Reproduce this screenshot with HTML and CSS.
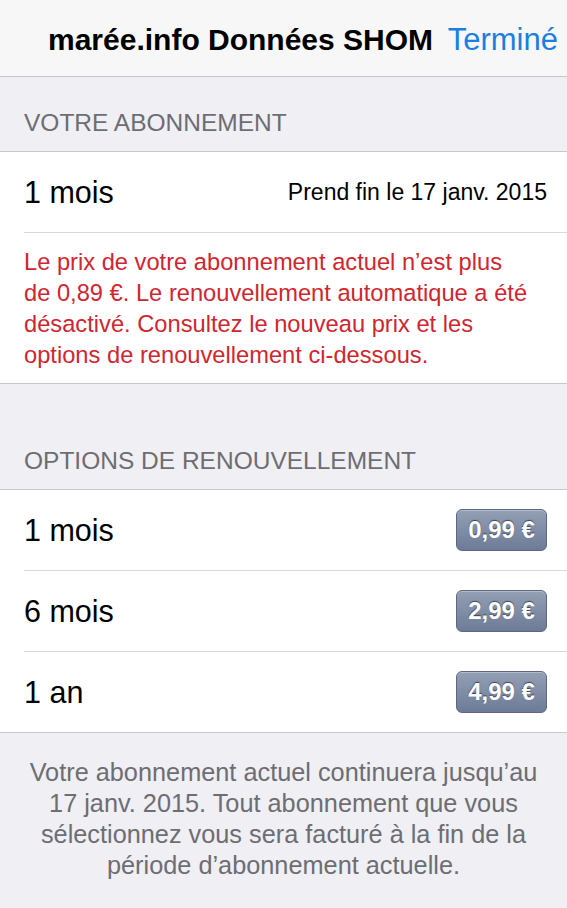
FILE: index.html
```html
<!DOCTYPE html>
<html lang="fr">
<head>
  <meta charset="UTF-8" />
  <meta name="viewport" content="width=device-width, initial-scale=1.0"/>
  <title>Abonnement</title>
  <link rel="stylesheet" href="styles.css">
</head>
<body>

  <div class="nav">
    <span class="nav-title">marée.info Données SHOM</span>
    <span class="nav-done">Terminé</span>
  </div>

  <div class="section-header first">VOTRE ABONNEMENT</div>
  <div class="group">
    <div class="row">
      <span class="row-label">1 mois</span>
      <span class="row-detail">Prend fin le 17 janv. 2015</span>
    </div>
    <div class="notice">
      Le prix de votre abonnement actuel n’est plus<br>
      de 0,89 €. Le renouvellement automatique a été<br>
      désactivé. Consultez le nouveau prix et les<br>
      options de renouvellement ci-dessous.
    </div>
  </div>

  <div class="section-header second">OPTIONS DE RENOUVELLEMENT</div>
  <div class="group">
    <div class="row">
      <span class="row-label">1 mois</span>
      <span class="price">0,99 €</span>
    </div>
    <div class="row">
      <span class="row-label">6 mois</span>
      <span class="price">2,99 €</span>
    </div>
    <div class="row">
      <span class="row-label">1 an</span>
      <span class="price">4,99 €</span>
    </div>
  </div>

  <div class="footer">
    Votre abonnement actuel continuera jusqu’au<br>
    17 janv. 2015. Tout abonnement que vous<br>
    sélectionnez vous sera facturé à la fin de la<br>
    période d’abonnement actuelle.
  </div>

</body>
</html>
```

FILE: styles.css
```css
body {
  margin: 0;
  font-family: 'Liberation Sans', Arial, sans-serif;
  background: #efeff4;
  color: #000;
}

.nav {
  height: 77px;
  box-sizing: border-box;
  background: #f7f7f8;
  border-bottom: 1px solid #c8c7cc;
  display: flex;
  align-items: center;
  padding: 3px 9px 0 48px;
  font-size: 30px;
  white-space: nowrap;
}

.nav-title {
  font-weight: bold;
  flex-shrink: 0;
}

.nav-done {
  color: #1a7fe0;
  font-size: 31px;
  margin-left: auto;
  flex-shrink: 0;
}

.section-header {
  box-sizing: border-box;
  display: flex;
  align-items: flex-end;
  padding: 0 24px 16px;
  font-size: 24.5px;
  line-height: 24px;
  color: #6d6d72;
}

.section-header.first {
  height: 74px;
}

.section-header.second {
  height: 105px;
}

.group {
  background: #fff;
  border-top: 1px solid #c8c7cc;
  border-bottom: 1px solid #c8c7cc;
}

.row {
  height: 80px;
  margin-left: 24px;
  padding-right: 20px;
  display: flex;
  align-items: center;
  justify-content: space-between;
  border-bottom: 1px solid #d9d8dc;
}

.row:last-child {
  border-bottom: none;
}

.row-label {
  font-size: 30.5px;
}

.row-detail {
  font-size: 23px;
}

.notice {
  padding: 14px 24px 12px;
  font-size: 23.7px;
  line-height: 31px;
  color: #d0262f;
}

.price {
  width: 91px;
  height: 42px;
  box-sizing: border-box;
  display: flex;
  align-items: center;
  justify-content: center;
  border: 1px solid #5d687c;
  border-radius: 6px;
  background: linear-gradient(#939fb4, #6d7b97);
  color: #fff;
  font-size: 24px;
  font-weight: bold;
  text-shadow: 0 -1px 1px rgba(0,0,0,0.55);
  box-shadow: inset 0 1px 0 rgba(255,255,255,0.3);
}

.footer {
  padding: 24px 10px 40px;
  text-align: center;
  font-size: 25.3px;
  line-height: 31px;
  color: #6d6d72;
}
```
